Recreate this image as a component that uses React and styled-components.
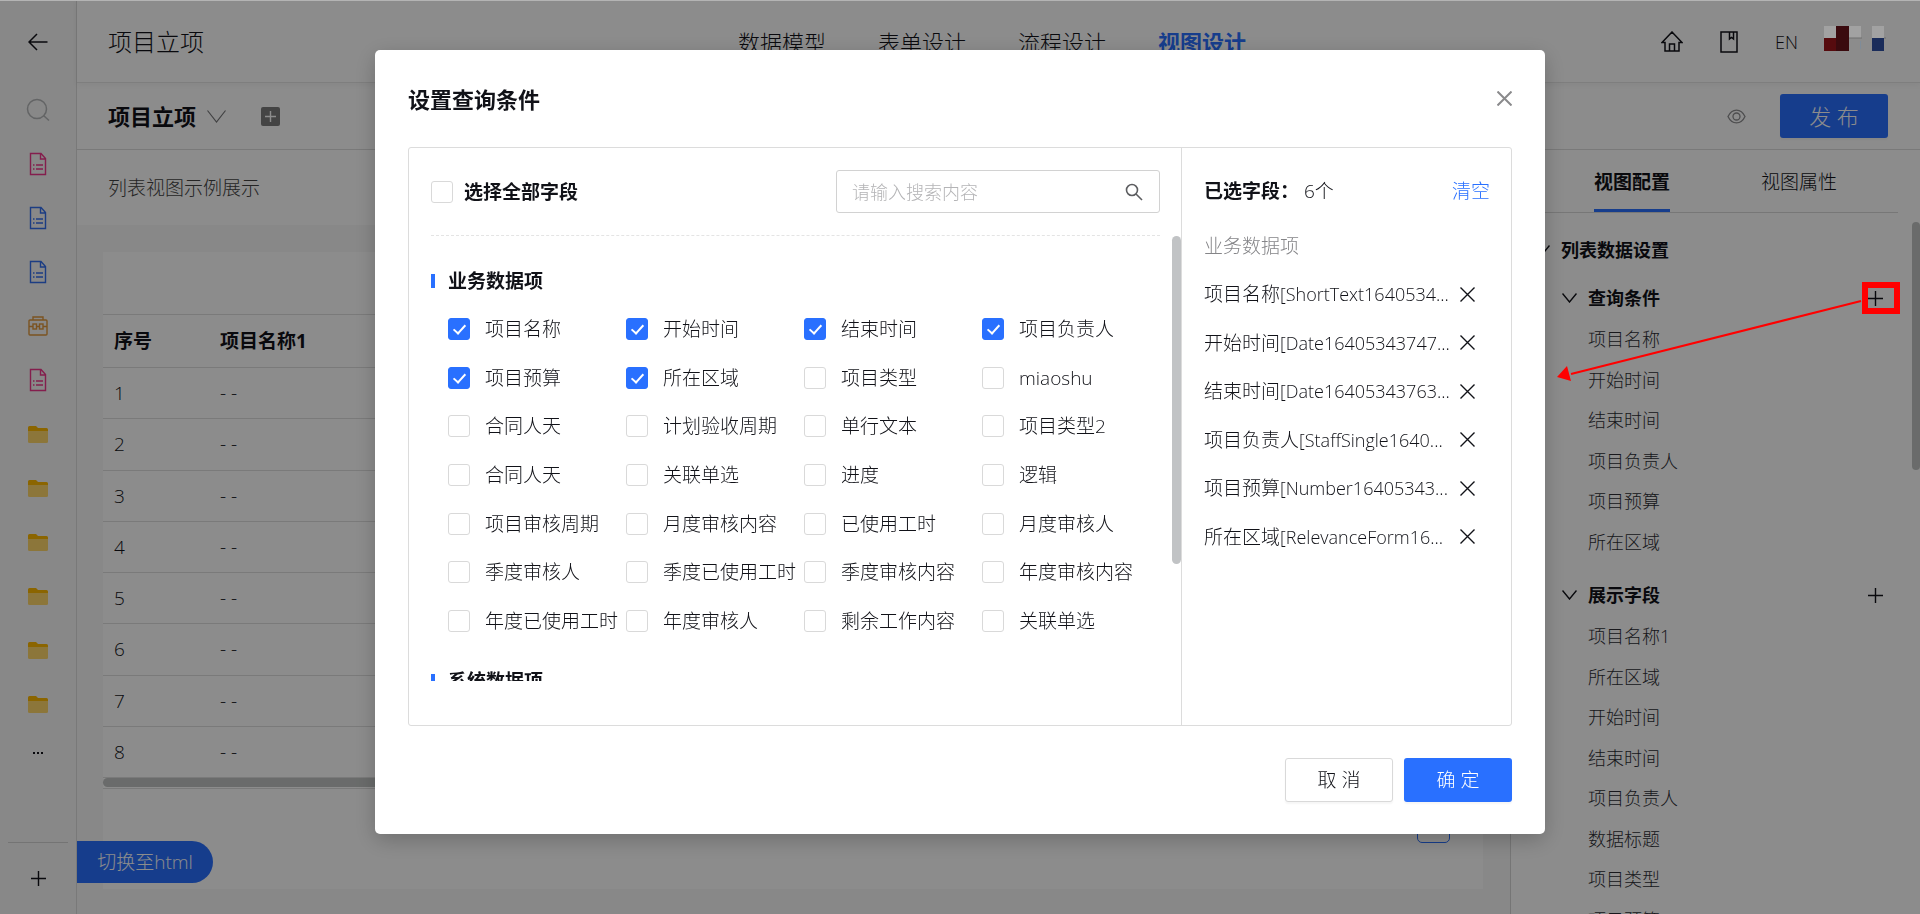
import React from "react";
import styled, { createGlobalStyle, css } from "styled-components";

const GlobalStyle = createGlobalStyle`
  *, *::before, *::after { box-sizing: border-box; }
  body {
    margin: 0;
    color: #111218;
    font-family: "Open Sans", "Noto Sans CJK SC", sans-serif;
    font-size: 19px;
    font-weight: 300;
    line-height: 28px;
  }
  button, input { font: inherit; color: inherit; }
  button { padding: 0; border: 0; background: none; cursor: pointer; white-space: nowrap; }
  svg { display: block; flex: none; }
  ul { margin: 0; padding: 0; list-style: none; }
  h1, h2, h3, p { margin: 0; font-size: inherit; font-weight: inherit; }
`;

const Shell = styled.div`
  position: relative;
  display: flex;
  height: 100vh;
  overflow: hidden;
  background: #fff;
`;

/* ---------- left rail ---------- */
const Rail = styled.aside`
  flex: none;
  display: flex;
  flex-direction: column;
  align-items: center;
  width: 77px;
  background: #f7f7f7;
  border-right: 1px solid #dcdcdc;
`;
const RailTop = styled.div`
  display: grid;
  place-items: center;
  height: 83px;
`;
const RailList = styled.nav`
  flex: 1;
  display: flex;
  flex-direction: column;
`;
const RailButton = styled.button`
  display: grid;
  place-items: center;
  width: 54px;
  height: ${(p) => (p.$short ? 44 : 54)}px;
`;
const RailFoot = styled.div`
  display: grid;
  place-items: center;
  width: 60px;
  height: 72px;
  border-top: 1px solid #d4d4d4;
`;

/* ---------- header ---------- */
const Main = styled.div`
  flex: 1;
  min-width: 0;
  display: flex;
  flex-direction: column;
`;
const Header = styled.header`
  flex: none;
  display: grid;
  grid-template-columns: 1fr auto 1fr;
  align-items: center;
  height: 83px;
  padding: 1px 34px 0 31px;
  border-bottom: 1px solid #e6e6e6;
  box-shadow: 0 2px 6px rgba(0, 0, 0, 0.05);
`;
const AppTitle = styled.h1`
  font-size: 24px;
`;
const TopNav = styled.nav`
  display: flex;
  gap: 52px;
  margin-right: 10px;
`;
const NavLink = styled.a`
  color: ${(p) => (p.$active ? "#2970ff" : "inherit")};
  font-size: 22px;
  font-weight: ${(p) => (p.$active ? 700 : 300)};
  text-decoration: none;
`;
const HeaderTools = styled.div`
  display: flex;
  justify-content: flex-end;
  align-items: center;
  gap: 37px;
  padding-right: 88px;
  font-size: 18px;
`;
const ViewBar = styled.div`
  flex: none;
  display: flex;
  align-items: center;
  height: 67px;
  padding: 0 32px 0 31px;
  border-bottom: 1px solid #dcdcdc;
`;
const ViewName = styled.button`
  display: flex;
  align-items: center;
  gap: 11px;
  font-size: 22px;
  font-weight: 700;
`;
const AddView = styled.button`
  display: grid;
  place-items: center;
  width: 19px;
  height: 19px;
  margin-left: 35px;
  border-radius: 2px;
  background: #7d7d7d;
`;
const ViewActions = styled.div`
  display: flex;
  align-items: center;
  gap: 34px;
  margin-left: auto;
`;
const Button = styled.button`
  width: 108px;
  height: 44px;
  border-radius: 3px;
  box-shadow: 0 2px 2px rgba(0, 0, 0, 0.04);
  ${(p) =>
    p.$primary
      ? css`
          background: #2970ff;
          color: #fff;
        `
      : css`
          background: #fff;
          border: 1px solid #d9d9d9;
        `}
  font-size: ${(p) => (p.$large ? 22 : 19)}px;
`;

/* ---------- work area ---------- */
const Work = styled.div`
  flex: 1;
  min-height: 0;
  display: flex;
`;
const Canvas = styled.section`
  position: relative;
  flex: 1;
  min-width: 0;
  display: flex;
  flex-direction: column;
  background: #f7f7f7;
`;
const Description = styled.p`
  padding: 24px 31px 23px;
  background: #fff;
  color: #444;
`;
const Card = styled.div`
  flex: 1;
  margin: 27px 27px 25px 26px;
  padding-top: 62px;
  background: #fff;
`;
const Table = styled.table`
  width: 100%;
  height: 464px;
  border-spacing: 0;
  table-layout: fixed;
  border-top: 1px solid #dfdfdf;
  th, td {
    height: 51px;
    padding: 0 11px;
    border-bottom: 1px solid #dfdfdf;
    text-align: left;
    font-weight: 300;
  }
  th { height: 53px; font-weight: 700; }
  th:first-child { width: 106px; }
`;
const TableScroll = styled.div`
  padding-bottom: 1px;
  border-bottom: 1px solid #dfdfdf;
`;
const TableThumb = styled.div`
  width: 68%;
  height: 9px;
  border-radius: 5px;
  background: #c1c4c3;
`;
const Pager = styled.div`
  display: flex;
  justify-content: flex-end;
  padding-top: 21px;
`;
const PageButton = styled.button`
  width: 33px;
  height: 33px;
  border: 1px solid ${(p) => (p.$active ? "#2970ff" : "transparent")};
  border-radius: 5px;
`;
const HtmlToggle = styled.button`
  position: absolute;
  left: 0;
  bottom: 31px;
  width: 136px;
  height: 42px;
  border-radius: 0 21px 21px 0;
  background: #2970ff;
  color: #fff;
`;

/* ---------- settings panel ---------- */
const Panel = styled.aside`
  flex: none;
  display: flex;
  flex-direction: column;
  width: 410px;
  border-left: 1px solid #d6d6d6;
`;
const PanelTabs = styled.div`
  flex: none;
  display: flex;
  justify-content: center;
  gap: 91px;
  margin: 0 22px;
  border-bottom: 1px solid #d9d9d9;
`;
const PanelTab = styled.button`
  height: 62px;
  padding-top: 4px;
  border-bottom: 3px solid ${(p) => (p.$active ? "#2970ff" : "transparent")};
  font-weight: ${(p) => (p.$active ? 700 : 300)};
`;
const PanelBody = styled.div`
  flex: 1;
  min-height: 0;
  display: flex;
  justify-content: space-between;
  overflow: hidden;
  font-size: 18px;
`;
const Tree = styled.div`
  flex: 1;
  padding: 16px 28px 0 24px;
`;
const PanelThumb = styled.div`
  width: 8px;
  height: 248px;
  margin-top: 9px;
  border-radius: 4px;
  background: #c1c4c3;
`;
const TreeHeading = styled.button`
  display: flex;
  align-items: center;
  gap: 11px;
  height: 42px;
  font-weight: 700;
`;
const TreeRoot = styled.div`
  margin-bottom: 6px;
`;
const TreeGroup = styled.div`
  margin: 0 0 12px 27px;
`;
const TreeGroupHead = styled.div`
  display: flex;
  justify-content: space-between;
  align-items: center;
  padding-right: 1px;
`;
const TreeItems = styled.ul`
  display: grid;
  grid-auto-rows: 1fr;
  align-items: center;
  min-height: ${(p) => p.$height}px;
  padding-left: 26px;
  color: #2c2d33;
`;

/* ---------- modal ---------- */
const Mask = styled.div`
  position: fixed;
  inset: 0;
  display: flex;
  justify-content: center;
  align-items: flex-start;
  padding-top: 50px;
  background: rgba(0, 0, 0, 0.45);
`;
const TopEdge = styled.div`
  position: absolute;
  top: 0;
  left: 0;
  right: 0;
  height: 1px;
  background: #b4b4b4;
`;
const Dialog = styled.section`
  display: flex;
  flex-direction: column;
  width: 1170px;
  max-width: 100%;
  padding: 0 33px 32px;
  border-radius: 5px;
  background: #fff;
  box-shadow: 0 6px 22px rgba(0, 0, 0, 0.22);
`;
const DialogHead = styled.div`
  display: flex;
  justify-content: space-between;
  align-items: center;
  height: 97px;
`;
const DialogTitle = styled.h2`
  font-size: 22px;
  font-weight: 700;
`;
const DialogBody = styled.div`
  display: flex;
  height: 579px;
  border: 1px solid #dcdcdc;
  border-radius: 3px;
`;
const Picker = styled.div`
  flex: 1;
  min-width: 0;
  padding-left: 22px;
`;
const PickerHead = styled.div`
  display: flex;
  justify-content: space-between;
  align-items: center;
  height: 88px;
  margin-right: 21px;
  border-bottom: 1px dashed #e4e4e4;
`;
const SearchBox = styled.div`
  display: flex;
  align-items: center;
  width: 324px;
  height: 43px;
  padding: 0 16px 0 15px;
  border: 1px solid #d2d2d2;
  border-radius: 3px;
`;
const SearchInput = styled.input`
  flex: 1;
  min-width: 0;
  padding: 0;
  border: 0;
  outline: 0;
  background: none;
  font-size: 18px;
  &::placeholder { color: #b4b4b6; opacity: 1; }
`;
const FieldScroll = styled.div`
  display: flex;
  height: 445px;
`;
const FieldList = styled.div`
  flex: 1;
  overflow: hidden;
  padding-top: 31px;
`;
const FieldThumb = styled.div`
  width: 9px;
  height: 328px;
  margin-left: 12px;
  border-radius: 5px;
  background: #c1c3c5;
`;
const SectionTitle = styled.h3`
  display: flex;
  align-items: center;
  gap: 13px;
  font-weight: 700;
  &::before {
    content: "";
    width: 4px;
    height: 14px;
    background: #2970ff;
  }
`;
const FieldGrid = styled.div`
  display: grid;
  grid-template-columns: repeat(4, 1fr);
  grid-auto-rows: 1fr;
  align-items: center;
  height: 340px;
  margin: 10px 0 22px 17px;
`;
const CheckLabel = styled.label`
  display: flex;
  align-items: center;
  gap: ${(p) => (p.$strong ? 11 : 15)}px;
  font-weight: ${(p) => (p.$strong ? 700 : 300)};
  white-space: nowrap;
`;
const Checkbox = styled.input.attrs({ type: "checkbox" })`
  appearance: none;
  flex: none;
  position: relative;
  width: 22px;
  height: 22px;
  margin: 0;
  border: 1px solid #d9d9d9;
  border-radius: 3px;
  background: #fff;
  &:checked {
    border-color: #2970ff;
    background: #2970ff;
  }
  &:checked::after {
    content: "";
    position: absolute;
    left: 7px;
    top: 3px;
    width: 7px;
    height: 12px;
    border: solid #fff;
    border-width: 0 2px 2px 0;
    transform: rotate(42deg);
  }
`;
const Chosen = styled.div`
  flex: none;
  width: 330px;
  padding: 29px 21px 0 22px;
  border-left: 1px solid #dcdcdc;
`;
const ChosenHead = styled.div`
  display: flex;
  align-items: center;
  margin-bottom: 27px;
`;
const ChosenTitle = styled.h3`
  width: 100px;
  font-weight: 700;
  white-space: nowrap;
`;
const ClearLink = styled.button`
  margin-left: auto;
  color: #2970ff;
`;
const ChosenGroup = styled.p`
  margin-bottom: 10px;
  color: #858588;
`;
const ChosenList = styled.ul`
  display: grid;
  grid-auto-rows: 1fr;
  height: 291px;
  padding-right: 15px;
`;
const ChosenItem = styled.li`
  display: flex;
  justify-content: space-between;
  align-items: center;
  white-space: nowrap;
`;
const FieldCode = styled.span`
  font-size: 18px;
`;
const DialogFoot = styled.div`
  display: flex;
  justify-content: flex-end;
  gap: 11px;
  padding-top: 32px;
`;

/* ---------- annotations over the page ---------- */
const Marker = styled.div`
  position: absolute;
  top: 282px;
  right: 20px;
  width: 38px;
  height: 32px;
  border: 6px solid #f00;
`;
const ArrowLayer = styled.svg`
  position: absolute;
  top: 296px;
  right: 57px;
`;
const Avatar = styled.svg`
  position: absolute;
  top: 26px;
  right: 34px;
`;

/* ---------- icons ---------- */
const Stroke = ({ w, h, color = "#111218", sw = 1, children }) => (
  <svg width={w} height={h} viewBox={`0 0 ${w} ${h}`} fill="none" stroke={color} strokeWidth={sw} aria-hidden="true">
    {children}
  </svg>
);
const BackIcon = () => (
  <Stroke w={20} h={18} sw={1.5}><path d="M9 1 1 9l8 8M1 9h18.500" /></Stroke>
);
const RailSearchIcon = () => (
  <Stroke w={24} h={24} color="#b5b7b9" sw={1.5}><circle cx="11" cy="11" r="9.500" /><path d="m17.500 17.500 5.500 5" /></Stroke>
);
const DocIcon = ({ color }) => (
  <Stroke w={18} h={24} color={color} sw={1.4}>
    <path d="M1.500 1.500h10.500l4.500 5v16h-15zM11.500 2v5h5" />
    <path d="M4 13h1.500M7 13h7M4 17h1.500M7 17h7" />
  </Stroke>
);
const CaseIcon = () => (
  <Stroke w={20} h={20} color="#e0983c" sw={1.4}>
    <rect x="1" y="4" width="18" height="15" rx="1" />
    <path d="M5 4V1h10v3M1 10.500h4M9 10.500h2M15 10.500h4" />
    <rect x="5" y="8" width="3.500" height="5" /><rect x="11.500" y="8" width="3.500" height="5" />
  </Stroke>
);
const FolderIcon = () => (
  <svg width="20" height="17" viewBox="0 0 20 17" aria-hidden="true">
    <path d="M0 1.500Q0 0 1.500 0H8l2 2h8.500Q20 2 20 3.500V6H0z" fill="#fdb900" />
    <path d="M0 5h20v10.500q0 1.500-1.500 1.500h-17Q0 17 0 15.500z" fill="#ffd76b" />
  </svg>
);
const DotsIcon = () => (
  <svg width="12" height="2" viewBox="0 0 12 2" aria-hidden="true"><path d="M1 0h2v2H1zM5 0h2v2H5zM9 0h2v2H9z" fill="#111218" /></svg>
);
const PlusIcon = ({ size = 15, color }) => (
  <Stroke w={size} h={size} color={color} sw={1.4}><path d={`M${size / 2} 0v${size}M0 ${size / 2}h${size}`} /></Stroke>
);
const ChevronIcon = ({ w = 15, h = 10, color, sw = 1.4 }) => (
  <Stroke w={w} h={h} color={color} sw={sw}><path d={`M.5 .5 ${w / 2} ${h - 1} ${w - 0.5} .5`} /></Stroke>
);
const CrossIcon = ({ size = 15, color, sw = 1.4 }) => (
  <Stroke w={size} h={size} color={color} sw={sw}><path d={`M.5 .5 ${size - 0.5} ${size - 0.5}M${size - 0.5} .5 .5 ${size - 0.5}`} /></Stroke>
);
const HomeIcon = () => (
  <Stroke w={22} h={21} sw={1.5}><path d="M1 11.500 11 1l10 10.500h-3V20H4v-8.500zM8.500 20v-7h5v7" /></Stroke>
);
const BookIcon = () => (
  <Stroke w={18} h={22} sw={1.5}><path d="M1 1h16v20H1zM9.500 1v7l2-1.500 2 1.500V1" /></Stroke>
);
const EyeIcon = () => (
  <Stroke w={19} h={15} color="#8e8e90" sw={1.3}><path d="M1 7.500C5 -1 14 -1 18 7.500 14 16 5 16 1 7.500z" /><circle cx="9.500" cy="7.500" r="3.500" /></Stroke>
);
const SearchIcon = () => (
  <Stroke w={18} h={18} color="#5c5d60" sw={1.6}><circle cx="7" cy="7" r="5.500" /><path d="m11 11 6 6" /></Stroke>
);

/* ---------- data ---------- */
const rail = ["pink", "blue", "blue", "case", "pink", "folder", "folder", "folder", "folder", "folder", "folder"];
const docColor = { pink: "#f0378c", blue: "#3470ee" };
const nav = ["数据模型", "表单设计", "流程设计", "视图设计"];
const fields = [
  "项目名称", "开始时间", "结束时间", "项目负责人",
  "项目预算", "所在区域", "项目类型", "miaoshu",
  "合同人天", "计划验收周期", "单行文本", "项目类型2",
  "合同人天", "关联单选", "进度", "逻辑",
  "项目审核周期", "月度审核内容", "已使用工时", "月度审核人",
  "季度审核人", "季度已使用工时", "季度审核内容", "年度审核内容",
  "年度已使用工时", "年度审核人", "剩余工作内容", "关联单选",
];
const chosen = [
  ["项目名称", "[ShortText1640534..."],
  ["开始时间", "[Date16405343747..."],
  ["结束时间", "[Date16405343763..."],
  ["项目负责人", "[StaffSingle1640..."],
  ["项目预算", "[Number16405343..."],
  ["所在区域", "[RelevanceForm16..."],
];
const groups = [
  { title: "查询条件", height: 243, items: ["项目名称", "开始时间", "结束时间", "项目负责人", "项目预算", "所在区域"] },
  { title: "展示字段", height: 324, items: ["项目名称1", "所在区域", "开始时间", "结束时间", "项目负责人", "数据标题", "项目类型", "项目预算"] },
];

const railIcon = (kind) => {
  if (kind === "case") return <CaseIcon />;
  if (kind === "folder") return <FolderIcon />;
  return <DocIcon color={docColor[kind]} />;
};

function LeftRail() {
  return (
    <Rail>
      <RailTop><RailButton aria-label="返回"><BackIcon /></RailButton></RailTop>
      <RailList>
        <RailButton aria-label="搜索"><RailSearchIcon /></RailButton>
        {rail.map((kind, i) => <RailButton key={i} aria-label="菜单项">{railIcon(kind)}</RailButton>)}
        <RailButton $short aria-label="更多"><DotsIcon /></RailButton>
      </RailList>
      <RailFoot><RailButton aria-label="新增"><PlusIcon /></RailButton></RailFoot>
    </Rail>
  );
}

function ListPreview() {
  return (
    <Canvas>
      <Description>列表视图示例展示</Description>
      <Card>
        <Table>
          <thead><tr><th>序号</th><th>项目名称1</th></tr></thead>
          <tbody>
            {[1, 2, 3, 4, 5, 6, 7, 8].map((n) => <tr key={n}><td>{n}</td><td>- -</td></tr>)}
          </tbody>
        </Table>
        <TableScroll><TableThumb /></TableScroll>
        <Pager>
          <PageButton aria-label="上一页">‹</PageButton>
          <PageButton $active>1</PageButton>
          <PageButton aria-label="下一页">›</PageButton>
        </Pager>
      </Card>
      <HtmlToggle>切换至html</HtmlToggle>
    </Canvas>
  );
}

function SettingsPanel() {
  return (
    <Panel>
      <PanelTabs>
        <PanelTab $active>视图配置</PanelTab>
        <PanelTab>视图属性</PanelTab>
      </PanelTabs>
      <PanelBody>
        <Tree>
          <TreeRoot><TreeHeading><ChevronIcon />列表数据设置</TreeHeading></TreeRoot>
          {groups.map((g) => (
            <TreeGroup key={g.title}>
              <TreeGroupHead>
                <TreeHeading><ChevronIcon />{g.title}</TreeHeading>
                <button aria-label={`添加${g.title}`}><PlusIcon /></button>
              </TreeGroupHead>
              <TreeItems $height={g.height}>{g.items.map((t) => <li key={t}>{t}</li>)}</TreeItems>
            </TreeGroup>
          ))}
        </Tree>
        <PanelThumb />
      </PanelBody>
    </Panel>
  );
}

function QueryDialog() {
  return (
    <Dialog role="dialog" aria-labelledby="query-title">
      <DialogHead>
        <DialogTitle id="query-title">设置查询条件</DialogTitle>
        <button aria-label="关闭"><CrossIcon color="#8a8a8c" sw={2} /></button>
      </DialogHead>
      <DialogBody>
        <Picker>
          <PickerHead>
            <CheckLabel $strong><Checkbox />选择全部字段</CheckLabel>
            <SearchBox>
              <SearchInput aria-label="搜索" placeholder="请输入搜索内容" />
              <SearchIcon />
            </SearchBox>
          </PickerHead>
          <FieldScroll>
            <FieldList>
              <SectionTitle>业务数据项</SectionTitle>
              <FieldGrid>
                {fields.map((name, i) => (
                  <CheckLabel key={i}><Checkbox defaultChecked={i < 6} />{name}</CheckLabel>
                ))}
              </FieldGrid>
              <SectionTitle>系统数据项</SectionTitle>
            </FieldList>
            <FieldThumb />
          </FieldScroll>
        </Picker>
        <Chosen>
          <ChosenHead>
            <ChosenTitle>已选字段：</ChosenTitle>
            <span>6个</span>
            <ClearLink>清空</ClearLink>
          </ChosenHead>
          <ChosenGroup>业务数据项</ChosenGroup>
          <ChosenList>
            {chosen.map(([name, code]) => (
              <ChosenItem key={name}>
                <span>{name}<FieldCode>{code}</FieldCode></span>
                <button aria-label={`移除${name}`}><CrossIcon /></button>
              </ChosenItem>
            ))}
          </ChosenList>
        </Chosen>
      </DialogBody>
      <DialogFoot>
        <Button>取 消</Button>
        <Button $primary>确 定</Button>
      </DialogFoot>
    </Dialog>
  );
}

export default function App() {
  return (
    <>
      <GlobalStyle />
      <Shell>
        <LeftRail />
        <Main>
          <Header>
            <AppTitle>项目立项</AppTitle>
            <TopNav>
              {nav.map((t) => <NavLink key={t} href="#" $active={t === "视图设计"}>{t}</NavLink>)}
            </TopNav>
            <HeaderTools>
              <button aria-label="首页"><HomeIcon /></button>
              <button aria-label="文档"><BookIcon /></button>
              <button>EN</button>
            </HeaderTools>
          </Header>
          <ViewBar>
            <ViewName>项目立项<ChevronIcon w={19} h={13} color="#77787a" sw={1.2} /></ViewName>
            <AddView aria-label="新增视图"><PlusIcon size={11} color="#fff" /></AddView>
            <ViewActions>
              <button aria-label="预览"><EyeIcon /></button>
              <Button $primary $large>发 布</Button>
            </ViewActions>
          </ViewBar>
          <Work>
            <ListPreview />
            <SettingsPanel />
          </Work>
        </Main>
      </Shell>
      <Mask>
        <TopEdge />
        <QueryDialog />
        <Avatar width="62" height="25" viewBox="0 0 62 25" aria-hidden="true">
          <path d="M0 0h12v12H0zM25 0h12v12H25zM48 0h12v12H48z" fill="#a2a2a2" />
          <path d="M0 12h12v13H0z" fill="#560b0e" />
          <path d="M12 0h13v25H12z" fill="#3a0a0e" />
          <path d="M48 12h12v13H48z" fill="#1a2c5a" />
          <path d="M25 12h13M60 12h2" stroke="#6e6e6e" />
          <path d="M36.500 15v8" stroke="#7f8c99" />
        </Avatar>
        <ArrowLayer width="306" height="90" viewBox="0 0 306 90" aria-hidden="true">
          <path d="M304 5 14 78" stroke="#f00" strokeWidth="2" />
          <path d="M0 81 10 70l4 15z" fill="#f00" />
        </ArrowLayer>
        <Marker />
      </Mask>
    </>
  );
}
